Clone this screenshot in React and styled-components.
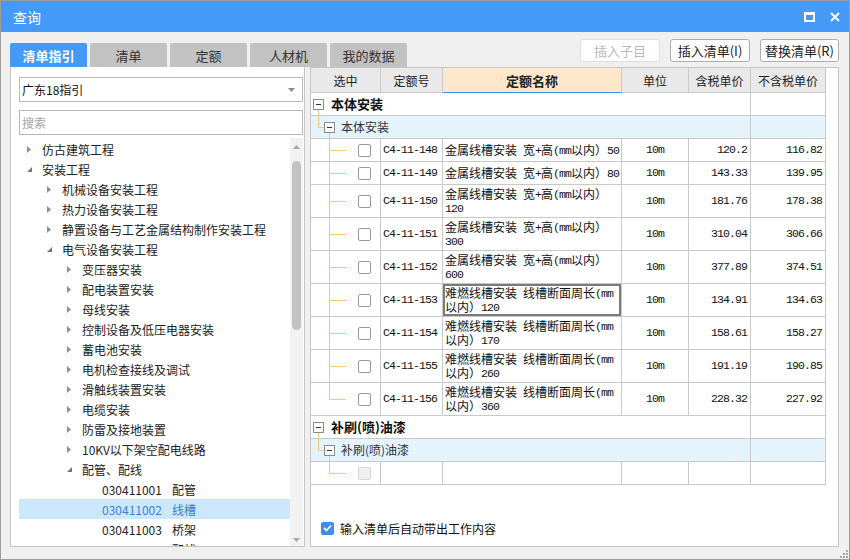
import React from 'react';
import styled, { createGlobalStyle } from 'styled-components';

const CJK = `"Noto Sans CJK SC", "Noto Sans", sans-serif`;
const LINE = '#c9c9c9';
const ORANGE = '#f8c67c';
const COLS = '70px 62px 179px 67px 62px 75px';

const GlobalStyle = createGlobalStyle`
  html, body { margin: 0; padding: 0; background: #fff; }
  body { font-family: ${CJK}; }
  * { box-sizing: border-box; }
`;

const Window = styled.div`
  position: relative;
  width: 850px;
  height: 560px;
  border: 1px solid #9d9d9d;
  background: #f0f0f0;
  display: flex;
  flex-direction: column;
  overflow: hidden;
  font-family: ${CJK};
  color: #222;
`;

const TitleBar = styled.div`
  height: 31px;
  flex: none;
  background: #4599f7;
  display: flex;
  align-items: center;
  padding: 0 9px 0 12px;
  color: #fff;
  font-size: 14px;
`;
const Title = styled.span`
  flex: 1;
`;
const WinControls = styled.div`
  display: flex;
  align-items: center;
  gap: 15px;
`;

const Body = styled.div`
  flex: 1;
  min-height: 0;
  display: flex;
  flex-direction: column;
  padding: 0 10px 12px 9px;
`;

const TopRow = styled.div`
  height: 35px;
  flex: none;
  display: flex;
  align-items: flex-end;
  justify-content: space-between;
`;

const Tabs = styled.div`
  display: flex;
  gap: 3px;
`;
const Tab = styled.div`
  width: 77px;
  height: 24px;
  border-radius: 2px 2px 0 0;
  display: flex;
  align-items: center;
  justify-content: center;
  font-size: 13px;
  background: ${p => (p.$active ? '#4599f7' : '#c2c2c2')};
  color: ${p => (p.$active ? '#fff' : '#333')};
  font-weight: ${p => (p.$active ? 700 : 400)};
`;

const Buttons = styled.div`
  display: flex;
  gap: 10px;
  margin-bottom: 5px;
`;
const Button = styled.button`
  width: ${p => p.$w || 80}px;
  height: 23px;
  padding: 0;
  border: 1px solid ${p => (p.disabled ? '#dedede' : '#adadad')};
  border-radius: 3px;
  background: #fff;
  font-family: ${CJK};
  font-size: 13px;
  color: ${p => (p.disabled ? '#b8b8b8' : '#222')};
  display: flex;
  align-items: center;
  justify-content: center;
`;

const Main = styled.div`
  flex: 1;
  min-height: 0;
  display: flex;
  gap: 5px;
`;

const LeftPane = styled.div`
  width: 295px;
  flex: none;
  background: #fff;
  border: 1px solid #c6c6c6;
  border-top: none;
  padding: 10px 1px 0 8px;
  display: flex;
  flex-direction: column;
  min-height: 0;
`;

const Select = styled.div`
  height: 25px;
  flex: none;
  border: 1px solid #b9b9b9;
  display: flex;
  align-items: center;
  padding: 0 7px 0 2px;
  font-size: 12px;
  color: #111;
`;
const SelectText = styled.span`
  flex: 1;
`;
const Search = styled.div`
  margin-top: 8px;
  height: 25px;
  flex: none;
  border: 1px solid #b9b9b9;
  display: flex;
  align-items: center;
  padding-left: 2px;
  font-size: 12px;
  color: #a5a5a5;
`;

const TreeBox = styled.div`
  margin-top: 3px;
  flex: 1;
  min-height: 0;
  display: flex;
  overflow: hidden;
`;
const TreeList = styled.div`
  flex: 1;
  min-width: 0;
  padding-top: 1px;
  overflow: hidden;
`;
const TreeRow = styled.div`
  height: 20px;
  display: flex;
  align-items: center;
  padding-left: ${p => 8 + p.$level * 20}px;
  font-size: 12px;
  white-space: nowrap;
  background: ${p => (p.$selected ? '#cce8ff' : 'transparent')};
  color: ${p => (p.$selected ? '#3b7fd6' : '#222')};
`;
const Toggle = styled.span`
  width: 15px;
  height: 100%;
  flex: none;
  display: flex;
  align-items: center;
`;
const LeafName = styled.span`
  margin-left: 10px;
`;

const ScrollBar = styled.div`
  width: 13px;
  flex: none;
  background: #f2f2f2;
  display: flex;
  flex-direction: column;
  align-items: center;
`;
const ScrollArrow = styled.div`
  height: ${p => p.$h}px;
  flex: none;
  display: flex;
  align-items: center;
  justify-content: center;
`;
const Thumb = styled.div`
  width: 9px;
  height: 169px;
  margin-top: 6px;
  border-radius: 5px;
  background: #c2c2c2;
`;
const ScrollSpace = styled.div`
  flex: 1;
`;

const RightPane = styled.div`
  flex: 1;
  min-width: 0;
  background: #fff;
  border: 1px solid #c6c6c6;
  display: flex;
  flex-direction: column;
`;
const TableArea = styled.div`
  flex: 1;
  min-height: 0;
`;
const Row = styled.div`
  display: grid;
  grid-template-columns: ${COLS};
  width: 515px;
  height: ${p => p.$h}px;
  background: ${p => (p.$sub ? '#e5f3fd' : 'transparent')};
`;
const HeadCell = styled.div`
  border-right: 1px solid ${LINE};
  border-bottom: 1px solid ${p => (p.$active ? '#3e8ef0' : LINE)};
  background: ${p => (p.$active ? '#fee8cb' : '#e9e9e9')};
  display: flex;
  align-items: center;
  justify-content: center;
  font-size: ${p => (p.$active ? 13 : 12)}px;
  font-weight: ${p => (p.$active ? 700 : 400)};
  color: #222;
`;
const Cell = styled.div`
  border-right: 1px solid ${LINE};
  border-bottom: 1px solid ${LINE};
  display: flex;
  align-items: center;
  justify-content: ${p => (p.$align === 'right' ? 'flex-end' : p.$align === 'center' ? 'center' : 'flex-start')};
  padding: 0 ${p => (p.$align === 'right' ? 3 : 2)}px 0 2px;
  min-width: 0;
  overflow: hidden;
  font-size: 12px;
  line-height: 14px;
  color: #111;
`;
const MonoCell = styled(Cell)`
  font-family: "Liberation Mono", monospace;
  font-size: 11.5px;
  letter-spacing: -0.9px;
`;
const NameCell = styled(Cell)`
  flex-direction: column;
  justify-content: center;
  align-items: flex-start;
  padding-right: 0;
  box-shadow: ${p => (p.$focus ? 'inset 0 0 0 2px #7a7a7a' : 'none')};
`;
const NameLine = styled.div`
  white-space: nowrap;
  height: 14px;
`;
const Latin = styled.span`
  font-family: "Liberation Mono", monospace;
  font-size: 11.5px;
  letter-spacing: -0.9px;
  vertical-align: 1px;
`;

const CheckCell = styled(Cell)`
  position: relative;
  overflow: visible;
  justify-content: flex-end;
  padding: 0 9px 0 0;
  &::before {
    content: '';
    position: absolute;
    left: 18px;
    top: ${p => (p.$first ? '-6px' : '-1px')};
    bottom: ${p => (p.$last ? '50%' : '-1px')};
    border-left: 1px solid ${ORANGE};
  }
  &::after {
    content: '';
    position: absolute;
    left: 18px;
    top: 50%;
    width: 17px;
    border-top: 1px solid ${ORANGE};
  }
`;
const CheckBox = styled.span`
  width: 13px;
  height: 13px;
  border-radius: 2px;
  border: 1px solid ${p => (p.$disabled ? '#d6d6d6' : '#9a9a9a')};
  background: ${p => (p.$disabled ? '#f0f0f0' : '#fff')};
`;

const GroupCell = styled(Cell)`
  grid-column: span 5;
  position: relative;
  overflow: visible;
  padding-left: ${p => (p.$sub ? 13 : 2)}px;
  &::before {
    content: '';
    display: ${p => (p.$sub ? 'block' : 'none')};
    position: absolute;
    left: 7px;
    top: -6px;
    height: 17px;
    width: 6px;
    border-left: 1px solid ${ORANGE};
    border-bottom: 1px solid ${ORANGE};
  }
`;
const Expander = styled.span`
  width: 11px;
  height: 11px;
  flex: none;
  position: relative;
  border: 1px solid #8c8c8c;
  background: #fff;
  &::after {
    content: '';
    position: absolute;
    left: 2px;
    right: 2px;
    top: 4px;
    height: 1px;
    background: #333;
  }
`;
const GroupLabel = styled.span`
  margin-left: ${p => (p.$sub ? 6 : 7)}px;
  font-size: ${p => (p.$sub ? 12 : 13)}px;
  font-weight: ${p => (p.$sub ? 400 : 700)};
  color: ${p => (p.$sub ? '#333' : '#111')};
  white-space: nowrap;
`;

const Footer = styled.div`
  height: 36px;
  flex: none;
  display: flex;
  align-items: center;
  padding-left: 10px;
  font-size: 12px;
  color: #111;
`;
const BlueCheck = styled.span`
  width: 13px;
  height: 13px;
  border-radius: 2px;
  background: #3d8ef0;
  display: flex;
  align-items: center;
  justify-content: center;
  margin-right: 6px;
`;

const Grip = styled.svg`
  position: absolute;
  right: 1px;
  bottom: 1px;
`;

function mixed(text) {
  return text.split(/([\x20-\x7e]+)/).map((p, i) => {
    if (!p) return null;
    if (/[\x20-\x7e]/.test(p[0])) return <Latin key={i}>{p}</Latin>;
    return <React.Fragment key={i}>{p}</React.Fragment>;
  });
}

const tree = [
  { level: 0, label: '仿古建筑工程', state: 'closed' },
  { level: 0, label: '安装工程', state: 'open' },
  { level: 1, label: '机械设备安装工程', state: 'closed' },
  { level: 1, label: '热力设备安装工程', state: 'closed' },
  { level: 1, label: '静置设备与工艺金属结构制作安装工程', state: 'closed' },
  { level: 1, label: '电气设备安装工程', state: 'open' },
  { level: 2, label: '变压器安装', state: 'closed' },
  { level: 2, label: '配电装置安装', state: 'closed' },
  { level: 2, label: '母线安装', state: 'closed' },
  { level: 2, label: '控制设备及低压电器安装', state: 'closed' },
  { level: 2, label: '蓄电池安装', state: 'closed' },
  { level: 2, label: '电机检查接线及调试', state: 'closed' },
  { level: 2, label: '滑触线装置安装', state: 'closed' },
  { level: 2, label: '电缆安装', state: 'closed' },
  { level: 2, label: '防雷及接地装置', state: 'closed' },
  { level: 2, label: '10KV以下架空配电线路', state: 'closed' },
  { level: 2, label: '配管、配线', state: 'open' },
  { level: 3, code: '030411001', label: '配管' },
  { level: 3, code: '030411002', label: '线槽', selected: true },
  { level: 3, code: '030411003', label: '桥架' },
  { level: 3, code: '030411004', label: '配线' },
];

const M1 = '金属线槽安装 宽+高(mm以内）';
const N1 = '难燃线槽安装 线槽断面周长(mm';
const rows = [
  { type: 'group', label: '本体安装' },
  { type: 'sub', label: '本体安装' },
  { code: 'C4-11-148', name: [M1 + '50'], tax: '120.2', notax: '116.82', first: true },
  { code: 'C4-11-149', name: [M1 + '80'], tax: '143.33', notax: '139.95' },
  { code: 'C4-11-150', name: [M1, '120'], tax: '181.76', notax: '178.38' },
  { code: 'C4-11-151', name: [M1, '300'], tax: '310.04', notax: '306.66' },
  { code: 'C4-11-152', name: [M1, '600'], tax: '377.89', notax: '374.51' },
  { code: 'C4-11-153', name: [N1, '以内）120'], tax: '134.91', notax: '134.63', focus: true },
  { code: 'C4-11-154', name: [N1, '以内）170'], tax: '158.61', notax: '158.27' },
  { code: 'C4-11-155', name: [N1, '以内）260'], tax: '191.19', notax: '190.85' },
  { code: 'C4-11-156', name: [N1, '以内）360'], tax: '228.32', notax: '227.92', last: true },
  { type: 'group', label: '补刷(喷)油漆' },
  { type: 'sub', label: '补刷(喷)油漆' },
  { type: 'empty' },
];

function TreeToggle({ state }) {
  if (state === 'closed')
    return (
      <svg width="5" height="7" viewBox="0 0 5 7">
        <polygon points="0,0 4,3.5 0,7" fill="#8e8e8e" />
      </svg>
    );
  if (state === 'open')
    return (
      <svg width="6" height="6" viewBox="0 0 6 6" style={{ marginTop: 2 }}>
        <polygon points="5,0 5,5 0,5" fill="#777" />
      </svg>
    );
  return null;
}

function TableRow({ r }) {
  if (r.type === 'group' || r.type === 'sub') {
    const sub = r.type === 'sub';
    return (
      <Row $h={23} $sub={sub}>
        <GroupCell $sub={sub}>
          <Expander />
          <GroupLabel $sub={sub}>{r.label}</GroupLabel>
        </GroupCell>
        <Cell />
      </Row>
    );
  }
  if (r.type === 'empty') {
    return (
      <Row $h={23}>
        <CheckCell $first $last>
          <CheckBox $disabled />
        </CheckCell>
        <Cell />
        <Cell />
        <Cell />
        <Cell />
        <Cell />
      </Row>
    );
  }
  const h = r.name.length > 1 ? 33 : 23;
  return (
    <Row $h={h}>
      <CheckCell $first={r.first} $last={r.last}>
        <CheckBox />
      </CheckCell>
      <MonoCell>{r.code}</MonoCell>
      <NameCell $focus={r.focus}>
        {r.name.map((l, i) => (
          <NameLine key={i}>{mixed(l)}</NameLine>
        ))}
      </NameCell>
      <MonoCell $align="center">10m</MonoCell>
      <MonoCell $align="right">{r.tax}</MonoCell>
      <MonoCell $align="right">{r.notax}</MonoCell>
    </Row>
  );
}

export default function App() {
  return (
    <>
      <GlobalStyle />
      <Window>
        <TitleBar>
          <Title>查询</Title>
          <WinControls>
            <svg width="11" height="10" viewBox="0 0 11 10">
              <rect x="1" y="1" width="9" height="8" fill="none" stroke="#fff" strokeWidth="2" />
              <rect x="0" y="0" width="11" height="3" fill="#fff" />
            </svg>
            <svg width="10" height="10" viewBox="0 0 10 10">
              <path d="M1 1 L9 9 M9 1 L1 9" stroke="#fff" strokeWidth="2" />
            </svg>
          </WinControls>
        </TitleBar>
        <Body>
          <TopRow>
            <Tabs>
              <Tab $active>清单指引</Tab>
              <Tab>清单</Tab>
              <Tab>定额</Tab>
              <Tab>人材机</Tab>
              <Tab>我的数据</Tab>
            </Tabs>
            <Buttons>
              <Button disabled>插入子目</Button>
              <Button>插入清单(I)</Button>
              <Button $w={79}>替换清单(R)</Button>
            </Buttons>
          </TopRow>
          <Main>
            <LeftPane>
              <Select>
                <SelectText>广东18指引</SelectText>
                <svg width="7" height="4" viewBox="0 0 7 4">
                  <polygon points="0,0 7,0 3.5,4" fill="#8a8a8a" />
                </svg>
              </Select>
              <Search>搜索</Search>
              <TreeBox>
                <TreeList>
                  {tree.map((t, i) => (
                    <TreeRow key={i} $level={t.level} $selected={t.selected}>
                      <Toggle>
                        <TreeToggle state={t.state} />
                      </Toggle>
                      {t.code ? (
                        <>
                          <span>{t.code}</span>
                          <LeafName>{t.label}</LeafName>
                        </>
                      ) : (
                        <span>{t.label}</span>
                      )}
                    </TreeRow>
                  ))}
                </TreeList>
                <ScrollBar>
                  <ScrollArrow $h={17}>
                    <svg width="7" height="4" viewBox="0 0 7 4">
                      <polygon points="0,4 7,4 3.5,0" fill="#a6a6a6" />
                    </svg>
                  </ScrollArrow>
                  <Thumb />
                  <ScrollSpace />
                  <ScrollArrow $h={12}>
                    <svg width="7" height="4" viewBox="0 0 7 4">
                      <polygon points="0,0 7,0 3.5,4" fill="#a6a6a6" />
                    </svg>
                  </ScrollArrow>
                </ScrollBar>
              </TreeBox>
            </LeftPane>
            <RightPane>
              <TableArea>
                <Row $h={25}>
                  <HeadCell>选中</HeadCell>
                  <HeadCell>定额号</HeadCell>
                  <HeadCell $active>定额名称</HeadCell>
                  <HeadCell>单位</HeadCell>
                  <HeadCell>含税单价</HeadCell>
                  <HeadCell>不含税单价</HeadCell>
                </Row>
                {rows.map((r, i) => (
                  <TableRow key={i} r={r} />
                ))}
              </TableArea>
              <Footer>
                <BlueCheck>
                  <svg width="9" height="8" viewBox="0 0 9 8">
                    <path d="M1 4 L3.5 6.5 L8 1.5" fill="none" stroke="#fff" strokeWidth="1.8" />
                  </svg>
                </BlueCheck>
                输入清单后自动带出工作内容
              </Footer>
            </RightPane>
          </Main>
        </Body>
        <Grip width="9" height="9" viewBox="0 0 9 9">
          {[[7, 1], [4, 4], [7, 4], [1, 7], [4, 7], [7, 7]].map(([x, y], i) => (
            <rect key={i} x={x} y={y} width="2" height="2" fill="#a8a8a8" />
          ))}
        </Grip>
      </Window>
    </>
  );
}
